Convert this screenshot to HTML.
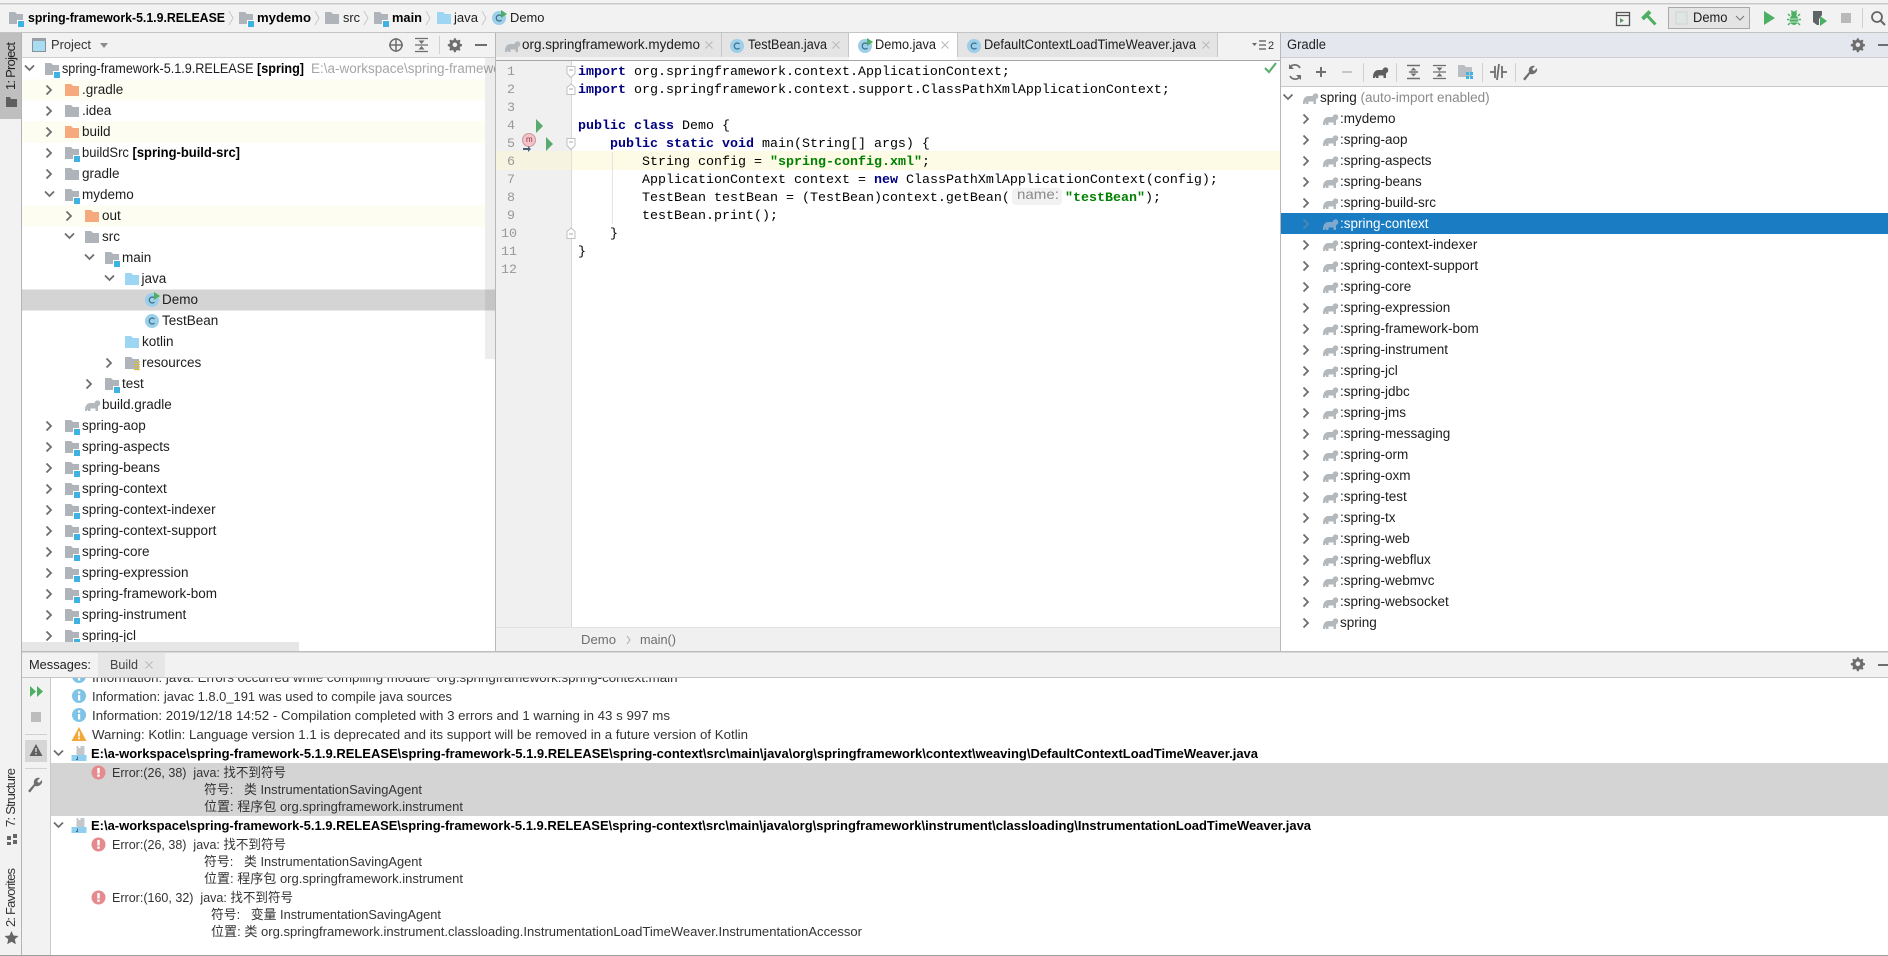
<!DOCTYPE html>
<html><head><meta charset="utf-8"><title>Demo.java</title>
<style>
html,body{margin:0;padding:0;background:#f2f2f2;width:1888px;height:956px;overflow:hidden}
svg{display:block}
text{font-family:"Liberation Sans","Noto Sans CJK SC",sans-serif;font-size:13.5px;fill:#1c1c1c;white-space:pre}
text:not([transform]){transform:translateY(-.8px)}
.m{font-size:13px;fill:#333}
.b{font-weight:bold;fill:#000}
.g{fill:#8a8a8a}
text.c{font-family:"Liberation Mono",monospace;font-size:13.33px;fill:#000;transform:none}
.k{font-weight:bold;fill:#000080}
.s{font-weight:bold;fill:#008000}
text.n{font-family:"Liberation Mono",monospace;font-size:13.33px;fill:#999;transform:none}
use[href="#el"]{fill:#b3b8bc}
</style></head><body>
<svg xmlns="http://www.w3.org/2000/svg" width="1888" height="956" viewBox="0 0 1888 956">
<defs>
<g id="cr"><path d="M-2.500-4.500 2 0-2.500 4.500" fill="none" stroke="#6e6e6e" stroke-width="1.800"/></g>
<g id="cd"><path d="M-4.500-2.500 0 2 4.500-2.500" fill="none" stroke="#6e6e6e" stroke-width="1.800"/></g>
<path id="fp" d="M0-6h6l2 2h6v10H0z"/>
<g id="fg"><use href="#fp" fill="#afb4bb"/></g>
<g id="fo"><use href="#fp" fill="#f5a97c"/></g>
<g id="fb"><use href="#fp" fill="#9dd6f2"/></g>
<g id="fm"><use href="#fp" fill="#afb4bb"/><rect x="8" y="2" width="7" height="7" fill="#fff"/><rect x="9" y="3" width="6" height="6" fill="#3fb2e2"/></g>
<g id="cl"><circle cx="7" cy="0" r="7" fill="#9ccfe9"/><path d="M9.500-2A3 3 0 1 0 9.500 2" fill="none" stroke="#3d6d85" stroke-width="1.200"/></g>
<g id="cg"><use href="#cl"/><path d="M9-8l6 4-6 4z" fill="#4caf63"/></g>
<path id="el" d="M0 6C-.3 1 2-2 5.500-2H9.500C10.300-5 14-5.500 15-3C15.500-1 15 .5 14 .5L13 1.500V6H10.500V3.500H5.500V6H3V4L1.800 6Z"/>
<path id="gr" d="M0-7.200 1.700-7.200 2.300-5.500 3.700-5 5.300-5.900 6.500-4.700 5.700-3.200 6.200-1.700 8-1.200V.6L6.200 1.100 5.700 2.600 6.500 4.100 5.300 5.300 3.700 4.500 2.300 5 1.700 6.700H0L-.5 5-2 4.500-3.500 5.300-4.700 4.100-3.900 2.600-4.400 1.100-6.200.6V-1.200L-4.400-1.700-3.900-3.200-4.700-4.700-3.500-5.900-2-5-.5-5.500zM.9-3A2.300 2.300 0 1 0 .9 1.600 2.300 2.300 0 1 0 .9-3z" fill="#6e6e6e" fill-rule="evenodd"/>
<path id="wr" d="M-8 7-2 0C-3-4 0-7 4-6L1-3l2 2 3-3C7 0 3 3-1 2L-6 8.500z" fill="#6e6e6e"/>
<g id="ii"><circle r="7" fill="#7fc4e8"/><rect x="-1" y="-1" width="2.200" height="5.500" fill="#fff"/><rect x="-1" y="-4.500" width="2.200" height="2.200" fill="#fff"/></g>
<g id="er"><circle r="7" fill="#e58a8f"/><rect x="-1.200" y="-4.500" width="2.400" height="5.500" fill="#fff"/><rect x="-1.200" y="2" width="2.400" height="2.300" fill="#fff"/></g>
<g id="jf"><path d="M5-8h2v2h2v-2h4v9H5z" fill="#c4c8cc"/><rect x="0" y="1" width="15" height="6" fill="#8fd0f0"/><path d="M6 2.500v3H4.500" fill="none" stroke="#3a6a88" stroke-width=".9"/></g>
<path id="x" d="M-3.500-3.500 3.500 3.500M3.500-3.500-3.500 3.500" stroke="#bbb" stroke-width="1.100" fill="none"/>
<clipPath id="pc"><rect x="22" y="57" width="473" height="594"/></clipPath>
<clipPath id="mc"><rect x="50" y="678" width="1838" height="277"/></clipPath>
</defs>

<rect width="1888" height="956" fill="#f2f2f2"/>
<rect x="0" y="3" width="1888" height="1.500" fill="#c9c9c9"/>
<rect x="0" y="32" width="1888" height="1" fill="#c4c4c4"/>

<!-- Navigation bar -->
<use href="#fm" x="9" y="18"/><text class="b" x="28" y="23" textLength="197" lengthAdjust="spacingAndGlyphs" style="font-size:13px">spring-framework-5.1.9.RELEASE</text>
<path d="M229 11l4 7-4 7" fill="none" stroke="#c8c8c8"/>
<use href="#fm" x="239" y="18"/><text class="b" x="257" y="23" textLength="54" lengthAdjust="spacingAndGlyphs" style="font-size:13px">mydemo</text>
<path d="M315 11l4 7-4 7" fill="none" stroke="#c8c8c8"/>
<use href="#fg" x="325" y="18"/><text x="343" y="23" textLength="17" lengthAdjust="spacingAndGlyphs" style="font-size:13px">src</text>
<path d="M364 11l4 7-4 7" fill="none" stroke="#c8c8c8"/>
<use href="#fm" x="374" y="18"/><text class="b" x="392" y="23" textLength="30" lengthAdjust="spacingAndGlyphs" style="font-size:13px">main</text>
<path d="M426 11l4 7-4 7" fill="none" stroke="#c8c8c8"/>
<use href="#fb" x="437" y="18"/><text x="454" y="23" textLength="24" lengthAdjust="spacingAndGlyphs" style="font-size:13px">java</text>
<path d="M482 11l4 7-4 7" fill="none" stroke="#c8c8c8"/>
<use href="#cg" x="492" y="18"/><text x="510" y="23" textLength="34.500" lengthAdjust="spacingAndGlyphs" style="font-size:13px">Demo</text>

<!-- Top toolbar right -->
<path d="M1616.500 12.500h13v13h-13zM1616.500 15.500h13" fill="none" stroke="#555" stroke-width="1.300"/><path d="M1620 18v5l4-2.500z" fill="#5a9a6a"/>
<path d="M1642.500 19 1650 11.500" stroke="#4caf63" stroke-width="4" fill="none"/><path d="M1647.500 16 1655.500 24.500" stroke="#4caf63" stroke-width="3" fill="none"/>
<rect x="1668.500" y="7.500" width="81" height="21" fill="#e4e4e4" stroke="#a8a8a8"/>
<rect x="1676" y="12" width="11" height="12" fill="#dfe5e2" stroke="#cdd6d2"/>
<text x="1693" y="23" textLength="34.500" lengthAdjust="spacingAndGlyphs">Demo</text>
<path d="M1736 16l4 4 4-4" fill="none" stroke="#777"/>
<path d="M1764 11v14l11-7z" fill="#4caf63"/>
<path d="M1788 14l2 2M1800 14l-2 2M1787 19.500h2M1801 19.500h-2M1788 25l2-2M1800 25l-2-2M1791.500 10.500l1 2M1796.500 10.500l-1 2" stroke="#4caf63" stroke-width="1.400" fill="none"/>
<circle cx="1794" cy="14" r="2.800" fill="#4caf63"/><ellipse cx="1794" cy="20" rx="4.500" ry="5" fill="#4caf63"/><path d="M1790 19h8M1790 22h8" stroke="#eef4ee" stroke-width=".8"/>
<path d="M1813 11h9v4l-3 4v6h-2l-4-3z" fill="#5e6468"/><path d="M1820 16v10l7-5z" fill="#4caf63"/>
<rect x="1841" y="13" width="10" height="10" fill="#b9b9b9"/>
<rect x="1862" y="8" width="1" height="20" fill="#cfcfcf"/>
<circle cx="1877" cy="17" r="5" fill="none" stroke="#666" stroke-width="1.800"/><path d="M1881 21l4 4" stroke="#666" stroke-width="2"/>

<!-- Left strip -->
<rect x="0" y="33" width="21" height="86" fill="#bfbfbf"/>
<rect x="21" y="33" width="1" height="923" fill="#b4b4b4"/>
<text class="m" transform="translate(15 90) rotate(-90)" textLength="48" style="fill:#222">1: Project</text>
<path d="M6 97h4l1 2h6v8H6z" fill="#5f5f5f"/>
<text class="m" transform="translate(15 827) rotate(-90)" textLength="59" style="fill:#333">7: Structure</text>
<path d="M7 836h4v4H7zM13 834h4v4h-4zM13 840h4v4h-4zM7 842h4v3H7z" fill="#666"/>
<text class="m" transform="translate(15 927) rotate(-90)" textLength="59" style="fill:#333">2: Favorites</text>
<path d="M11.500 931l2 4.500 5 .5-3.700 3.300 1 5-4.300-2.600-4.300 2.600 1-5-3.700-3.300 5-.5z" fill="#666"/>

<!-- Project panel -->
<rect x="22" y="33" width="473" height="24" fill="#f2f2f2"/>
<rect x="22" y="57" width="473" height="1" fill="#cfcfcf"/>
<rect x="22" y="58" width="473" height="593" fill="#fff"/>
<rect x="32.500" y="38.500" width="13" height="13" fill="#a8dcf3" stroke="#8a8f96"/><rect x="32" y="38" width="14" height="3" fill="#9aa0a6"/>
<text class="m" x="51" y="50" textLength="40" lengthAdjust="spacingAndGlyphs" style="fill:#333">Project</text>
<path d="M100 43h8l-4 5z" fill="#8c8c8c"/>
<circle cx="396" cy="45" r="6" fill="none" stroke="#6e6e6e" stroke-width="1.500"/><path d="M396 38v14M389 45h14" stroke="#6e6e6e" stroke-width="1.500"/>
<path d="M415 38.500h13M415 51.500h13M415 45h13" stroke="#6e6e6e" stroke-width="1.200"/><path d="M421.500 44l-3-3.500h6zM421.500 46l-3 3.500h6z" fill="#6e6e6e"/>
<rect x="439" y="36" width="1" height="18" fill="#d0d0d0"/>
<use href="#gr" x="454" y="45.500"/>
<rect x="475" y="44" width="12" height="2" fill="#6e6e6e"/>

<rect x="22" y="79.500" width="463" height="21" fill="#fdfdf1"/>
<rect x="22" y="121.500" width="463" height="21" fill="#fdfdf1"/>
<rect x="22" y="205.500" width="463" height="21" fill="#fdfdf1"/>
<rect x="22" y="289.500" width="473" height="21" fill="#d4d4d4"/>

<g clip-path="url(#pc)">
<use href="#cd" x="29.500" y="68"/><use href="#fm" x="45" y="69"/><text x="62" y="74" textLength="242" lengthAdjust="spacingAndGlyphs">spring-framework-5.1.9.RELEASE <tspan class="b">[spring]</tspan></text><text x="311" y="74" style="fill:#a5a5a5">E:\a-workspace\spring-framework-5.1.9.RELEASE</text>
</g>
<use href="#cr" x="49" y="90"/><use href="#fo" x="65" y="90"/><text x="82" y="95">.gradle</text>
<use href="#cr" x="49" y="111"/><use href="#fg" x="65" y="111"/><text x="82" y="116">.idea</text>
<use href="#cr" x="49" y="132"/><use href="#fo" x="65" y="132"/><text x="82" y="137">build</text>
<use href="#cr" x="49" y="153"/><use href="#fm" x="65" y="153"/><text x="82" y="158" textLength="158" lengthAdjust="spacingAndGlyphs">buildSrc <tspan class="b">[spring-build-src]</tspan></text>
<use href="#cr" x="49" y="174"/><use href="#fg" x="65" y="174"/><text x="82" y="179">gradle</text>
<use href="#cd" x="49.500" y="194"/><use href="#fm" x="65" y="195"/><text x="82" y="200">mydemo</text>
<use href="#cr" x="69" y="216"/><use href="#fo" x="85" y="216"/><text x="102" y="221">out</text>
<use href="#cd" x="69.500" y="236"/><use href="#fg" x="85" y="237"/><text x="102" y="242">src</text>
<use href="#cd" x="89.500" y="257"/><use href="#fm" x="105" y="258"/><text x="122" y="263">main</text>
<use href="#cd" x="109.500" y="278"/><use href="#fb" x="125" y="279"/><text x="141.500" y="284">java</text>
<use href="#cg" x="145" y="300"/><text x="162" y="305">Demo</text>
<use href="#cl" x="145" y="321"/><text x="162" y="326">TestBean</text>
<use href="#fb" x="125" y="342"/><text x="142" y="347">kotlin</text>
<use href="#cr" x="109" y="363"/><use href="#fg" x="125" y="363"/><path d="M134 362h6M134 364.500h6M134 367h6M134 369.500h6" stroke="#d9b84a" stroke-width="1.200"/><text x="142" y="368">resources</text>
<use href="#cr" x="89" y="384"/><use href="#fm" x="105" y="384"/><text x="122" y="389">test</text>
<use href="#el" x="85" y="405"/><text x="102" y="410">build.gradle</text>
<use href="#cr" x="49" y="426"/><use href="#fm" x="65" y="426"/><text x="82" y="431">spring-aop</text>
<use href="#cr" x="49" y="447"/><use href="#fm" x="65" y="447"/><text x="82" y="452">spring-aspects</text>
<use href="#cr" x="49" y="468"/><use href="#fm" x="65" y="468"/><text x="82" y="473">spring-beans</text>
<use href="#cr" x="49" y="489"/><use href="#fm" x="65" y="489"/><text x="82" y="494">spring-context</text>
<use href="#cr" x="49" y="510"/><use href="#fm" x="65" y="510"/><text x="82" y="515">spring-context-indexer</text>
<use href="#cr" x="49" y="531"/><use href="#fm" x="65" y="531"/><text x="82" y="536">spring-context-support</text>
<use href="#cr" x="49" y="552"/><use href="#fm" x="65" y="552"/><text x="82" y="557">spring-core</text>
<use href="#cr" x="49" y="573"/><use href="#fm" x="65" y="573"/><text x="82" y="578">spring-expression</text>
<use href="#cr" x="49" y="594"/><use href="#fm" x="65" y="594"/><text x="82" y="599">spring-framework-bom</text>
<use href="#cr" x="49" y="615"/><use href="#fm" x="65" y="615"/><text x="82" y="620">spring-instrument</text>
<use href="#cr" x="49" y="636"/><use href="#fm" x="65" y="636"/><text x="82" y="641">spring-jcl</text>
<rect x="485" y="58" width="10" height="301" fill="#000" fill-opacity=".07"/>
<rect x="22" y="642" width="277" height="9" fill="#e6e6e6"/>
<rect x="495" y="33" width="1" height="619" fill="#b8b8b8"/>

<!-- Editor tabs -->
<rect x="496" y="33" width="784" height="24" fill="#e4e4e4"/>
<rect x="496" y="57" width="784" height="3" fill="#f2f2f2"/>
<rect x="496" y="60" width="784" height="1" fill="#a6a6a6"/>
<rect x="721" y="33" width="1" height="24" fill="#c6c6c6"/><rect x="848" y="33" width="1" height="24" fill="#c6c6c6"/>
<rect x="849" y="33" width="108" height="27" fill="#fff"/>
<rect x="957" y="33" width="1" height="24" fill="#c6c6c6"/><rect x="1217" y="33" width="1" height="24" fill="#c6c6c6"/>
<rect x="1218" y="33" width="62" height="24" fill="#f2f2f2"/>
<use href="#el" x="505" y="46"/><text x="522" y="50" textLength="178" lengthAdjust="spacingAndGlyphs">org.springframework.mydemo</text><use href="#x" x="709" y="45"/>
<use href="#cl" x="730" y="46"/><text x="748" y="50" textLength="79" lengthAdjust="spacingAndGlyphs">TestBean.java</text><use href="#x" x="836" y="45"/>
<use href="#cg" x="858" y="46"/><text x="875" y="50" textLength="61" lengthAdjust="spacingAndGlyphs">Demo.java</text><use href="#x" x="945" y="45"/>
<use href="#cl" x="967" y="46"/><text x="984" y="50" textLength="212" lengthAdjust="spacingAndGlyphs">DefaultContextLoadTimeWeaver.java</text><use href="#x" x="1206" y="45"/>
<path d="M1252 43h5l-2.500 3z" fill="#666"/><path d="M1259 41h7M1259 45h7M1259 49h7" stroke="#555" stroke-width="1.200"/><text class="m" x="1268" y="50" style="font-size:11px">2</text>

<!-- Editor body -->
<rect x="496" y="61" width="784" height="566" fill="#fff"/>
<rect x="496" y="61" width="76" height="566" fill="#f0f0f0"/>
<rect x="571" y="61" width="1" height="566" fill="#d8d8d8"/>
<rect x="496" y="151" width="784" height="19" fill="#fdfbe6"/>
<rect x="496" y="151" width="75" height="19" fill="#f6f4e0"/>
<rect x="571" y="151" width="1" height="19" fill="#e3e3d0"/>
<rect x="612" y="152" width="1" height="72" fill="#e3e3e3"/>
<text class="n" x="507" y="75">1</text><text class="n" x="507" y="93">2</text><text class="n" x="507" y="111">3</text><text class="n" x="507" y="129">4</text><text class="n" x="507" y="147">5</text><text class="n" x="507" y="165">6</text><text class="n" x="507" y="183">7</text><text class="n" x="507" y="201">8</text><text class="n" x="507" y="219">9</text><text class="n" x="501" y="237">10</text><text class="n" x="501" y="255">11</text><text class="n" x="501" y="273">12</text>
<path d="M536 119v14l7-7z" fill="#5aa96e"/><path d="M546 137v14l7-7z" fill="#5aa96e"/>
<circle cx="529" cy="140" r="6.500" fill="#f6c3c8" stroke="#c49a9d"/><text x="526" y="143" style="font-size:8px;fill:#7a3a3f">m</text><path d="M523 148h5v-2l3 3-3 3v-2h-5z" fill="#4a6072"/>
<path d="M567 66.500h8v7l-4 4-4-4z" fill="#fff" stroke="#c0c0c0"/><path d="M569 70h4" stroke="#aaa"/>
<path d="M567 94.500h8v-7l-4-3.500-4 3.500z" fill="#fff" stroke="#c0c0c0"/><path d="M569 89h4" stroke="#aaa"/>
<path d="M567 138.500h8v7l-4 4-4-4z" fill="#fff" stroke="#c0c0c0"/><path d="M569 142h4" stroke="#aaa"/>
<path d="M567 238.500h8v-7l-4-3.500-4 3.500z" fill="#fff" stroke="#c0c0c0"/><path d="M569 234h4" stroke="#aaa"/>
<path d="M1265 68l4 4 7-9" fill="none" stroke="#5fae72" stroke-width="2.200"/>
<text class="c" x="578" y="75"><tspan class="k">import</tspan> org.springframework.context.ApplicationContext;</text>
<text class="c" x="578" y="93"><tspan class="k">import</tspan> org.springframework.context.support.ClassPathXmlApplicationContext;</text>
<text class="c" x="578" y="129"><tspan class="k">public class</tspan> Demo {</text>
<text class="c" x="610" y="147"><tspan class="k">public static void</tspan> main(String[] args) {</text>
<text class="c" x="642" y="165">String config = <tspan class="s">"spring-config.xml"</tspan>;</text>
<text class="c" x="642" y="183">ApplicationContext context = <tspan class="k">new</tspan> ClassPathXmlApplicationContext(config);</text>
<rect x="1012" y="188" width="50" height="17" rx="4" fill="#f2f2f2"/>
<text class="c" x="642" y="201">TestBean testBean = (TestBean)context.getBean(</text>
<text x="1017" y="200" textLength="42" lengthAdjust="spacingAndGlyphs" style="font-size:14px;fill:#8a8a8a">name:</text>
<text class="c" x="1065" y="201"><tspan class="s">"testBean"</tspan>);</text>
<text class="c" x="642" y="219">testBean.print();</text>
<text class="c" x="610" y="237">}</text>
<text class="c" x="578" y="255">}</text>

<!-- Editor breadcrumb -->
<rect x="496" y="627" width="784" height="1" fill="#e2e2e2"/>
<rect x="496" y="628" width="784" height="23" fill="#f0f0f0"/>
<text x="581" y="645" textLength="35" lengthAdjust="spacingAndGlyphs" style="font-size:13px;fill:#6e6e6e">Demo</text>
<path d="M627 636l3 4-3 4" fill="none" stroke="#aaa"/>
<text x="640" y="645" textLength="36" lengthAdjust="spacingAndGlyphs" style="font-size:13px;fill:#6e6e6e">main()</text>

<!-- Gradle -->
<rect x="1280" y="33" width="1" height="619" fill="#b8b8b8"/>
<rect x="1281" y="33" width="607" height="24" fill="#e4e7ee"/>
<rect x="1281" y="57" width="607" height="1" fill="#cfcfcf"/>
<rect x="1281" y="58" width="607" height="28" fill="#f2f2f2"/>
<rect x="1281" y="86" width="607" height="1" fill="#c8c8c8"/>
<rect x="1281" y="87" width="607" height="564" fill="#fff"/>
<text x="1287" y="50" textLength="39" lengthAdjust="spacingAndGlyphs" style="fill:#222">Gradle</text>
<use href="#gr" x="1857" y="45.500"/>
<rect x="1878" y="44" width="10" height="2" fill="#6e6e6e"/>
<path d="M1300 68a6 6 0 0 0-10.500 0M1290 76a6 6 0 0 0 10.500 0" fill="none" stroke="#6e6e6e" stroke-width="1.800"/><path d="M1289 64v5h5zM1301 80v-5h-5z" fill="#6e6e6e"/>
<path d="M1316 72h10M1321 67v10" stroke="#6e6e6e" stroke-width="2"/>
<rect x="1342" y="71" width="10" height="2" fill="#c6c6c6"/>
<rect x="1363" y="63" width="1" height="19" fill="#d0d0d0"/>
<use href="#el" x="1373" y="72" style="fill:#5e5e5e"/>
<rect x="1396" y="63" width="1" height="19" fill="#d0d0d0"/>
<path d="M1407 65.500h13M1407 78.500h13M1409 72h9" stroke="#6e6e6e" stroke-width="1.500"/><path d="M1413.500 67.500l-3 3h6zM1413.500 76.500l-3-3h6z" fill="#6e6e6e"/>
<path d="M1433 65.500h13M1433 72h13M1433 78.500h13" stroke="#6e6e6e" stroke-width="1.200"/><path d="M1439.500 71l-3-3.500h6zM1439.500 73l-3 3.500h6z" fill="#6e6e6e"/>
<path d="M1458 65h6l2 2h6v10h-14z" fill="#b9bec4"/><path d="M1466 72h3v3h-3zM1470 72h3v3h-3zM1466 76h3v3h-3zM1470 76h3v3h-3z" fill="#3fb2e2"/>
<rect x="1482" y="63" width="1" height="19" fill="#d0d0d0"/>
<path d="M1490 72h5M1502 72h5M1499 64l-2 16M1502 66v12M1495 66v12" stroke="#6e6e6e" stroke-width="1.800" fill="none"/>
<rect x="1515" y="63" width="1" height="19" fill="#d0d0d0"/>
<g transform="translate(1531 72)"><use href="#wr"/></g>
<rect x="1281" y="213" width="607" height="21" fill="#1a7dc4"/>

<use href="#cd" x="1288" y="97"/><use href="#el" x="1303" y="98"/><text x="1320" y="103">spring <tspan style="fill:#8a8a8a">(auto-import enabled)</tspan></text>
<use href="#cr" x="1306" y="119"/><use href="#el" x="1323" y="119"/><text x="1340" y="124">:mydemo</text>
<use href="#cr" x="1306" y="140"/><use href="#el" x="1323" y="140"/><text x="1340" y="145">:spring-aop</text>
<use href="#cr" x="1306" y="161"/><use href="#el" x="1323" y="161"/><text x="1340" y="166">:spring-aspects</text>
<use href="#cr" x="1306" y="182"/><use href="#el" x="1323" y="182"/><text x="1340" y="187">:spring-beans</text>
<use href="#cr" x="1306" y="203"/><use href="#el" x="1323" y="203"/><text x="1340" y="208">:spring-build-src</text>
<path d="M1303.500 219.500 1308 224 1303.500 228.500" fill="none" stroke="#4f86b4" stroke-width="1.800"/><use href="#el" x="1323" y="224" style="fill:#7ea8cc"/><text x="1340" y="229" style="fill:#fff">:spring-context</text>
<use href="#cr" x="1306" y="245"/><use href="#el" x="1323" y="245"/><text x="1340" y="250">:spring-context-indexer</text>
<use href="#cr" x="1306" y="266"/><use href="#el" x="1323" y="266"/><text x="1340" y="271">:spring-context-support</text>
<use href="#cr" x="1306" y="287"/><use href="#el" x="1323" y="287"/><text x="1340" y="292">:spring-core</text>
<use href="#cr" x="1306" y="308"/><use href="#el" x="1323" y="308"/><text x="1340" y="313">:spring-expression</text>
<use href="#cr" x="1306" y="329"/><use href="#el" x="1323" y="329"/><text x="1340" y="334">:spring-framework-bom</text>
<use href="#cr" x="1306" y="350"/><use href="#el" x="1323" y="350"/><text x="1340" y="355">:spring-instrument</text>
<use href="#cr" x="1306" y="371"/><use href="#el" x="1323" y="371"/><text x="1340" y="376">:spring-jcl</text>
<use href="#cr" x="1306" y="392"/><use href="#el" x="1323" y="392"/><text x="1340" y="397">:spring-jdbc</text>
<use href="#cr" x="1306" y="413"/><use href="#el" x="1323" y="413"/><text x="1340" y="418">:spring-jms</text>
<use href="#cr" x="1306" y="434"/><use href="#el" x="1323" y="434"/><text x="1340" y="439">:spring-messaging</text>
<use href="#cr" x="1306" y="455"/><use href="#el" x="1323" y="455"/><text x="1340" y="460">:spring-orm</text>
<use href="#cr" x="1306" y="476"/><use href="#el" x="1323" y="476"/><text x="1340" y="481">:spring-oxm</text>
<use href="#cr" x="1306" y="497"/><use href="#el" x="1323" y="497"/><text x="1340" y="502">:spring-test</text>
<use href="#cr" x="1306" y="518"/><use href="#el" x="1323" y="518"/><text x="1340" y="523">:spring-tx</text>
<use href="#cr" x="1306" y="539"/><use href="#el" x="1323" y="539"/><text x="1340" y="544">:spring-web</text>
<use href="#cr" x="1306" y="560"/><use href="#el" x="1323" y="560"/><text x="1340" y="565">:spring-webflux</text>
<use href="#cr" x="1306" y="581"/><use href="#el" x="1323" y="581"/><text x="1340" y="586">:spring-webmvc</text>
<use href="#cr" x="1306" y="602"/><use href="#el" x="1323" y="602"/><text x="1340" y="607">:spring-websocket</text>
<use href="#cr" x="1306" y="623"/><use href="#el" x="1323" y="623"/><text x="1340" y="628">spring</text>

<!-- Bottom panel -->
<rect x="22" y="651" width="1866" height="1.500" fill="#bdbdbd"/>
<rect x="22" y="653" width="1866" height="24" fill="#f2f2f2"/>
<rect x="98" y="653" width="67" height="24" fill="#e6e6e6"/>
<rect x="22" y="677" width="1866" height="1.500" fill="#c6c6c6"/>
<rect x="22" y="678" width="1866" height="277" fill="#fff"/>
<rect x="22" y="678" width="28" height="277" fill="#f2f2f2"/>
<rect x="50" y="678" width="1" height="277" fill="#c8c8c8"/>
<rect x="0" y="955" width="1888" height="1" fill="#9e9e9e"/>
<text class="m" x="29" y="670" textLength="62" lengthAdjust="spacingAndGlyphs" style="fill:#222">Messages:</text>
<text class="m" x="110" y="670" textLength="28" lengthAdjust="spacingAndGlyphs" style="fill:#444">Build</text>
<use href="#x" x="149" y="665"/>
<use href="#gr" x="1857" y="664.500"/>
<rect x="1878" y="664" width="10" height="2" fill="#6e6e6e"/>
<path d="M30 686v11l6-5.500zM37 686v11l6-5.500z" fill="#4caf63"/>
<rect x="31" y="712" width="10" height="10" fill="#bdbdbd"/>
<rect x="25" y="734" width="22" height="1" fill="#d2d2d2"/>
<rect x="25" y="740" width="22" height="22" fill="#d6d6d6"/>
<path d="M36 744l6.500 12h-13z" fill="#606060"/><rect x="35.300" y="748" width="1.400" height="4" fill="#d6d6d6"/><rect x="35.300" y="753" width="1.400" height="1.500" fill="#d6d6d6"/>
<rect x="25" y="768" width="22" height="1" fill="#d2d2d2"/>
<g transform="translate(36 784)"><use href="#wr"/></g>

<rect x="51" y="763" width="1837" height="53" fill="#d4d4d4"/>
<g clip-path="url(#mc)">
<use href="#ii" x="79" y="676"/><text class="m" x="92" y="683" textLength="588" lengthAdjust="spacingAndGlyphs">Information: java: Errors occurred while compiling module 'org.springframework.spring-context.main'</text>
</g>
<use href="#ii" x="79" y="696"/><text class="m" x="92" y="702" textLength="360" lengthAdjust="spacingAndGlyphs">Information: javac 1.8.0_191 was used to compile java sources</text>
<use href="#ii" x="79" y="715"/><text class="m" x="92" y="721" textLength="578" lengthAdjust="spacingAndGlyphs">Information: 2019/12/18 14:52 - Compilation completed with 3 errors and 1 warning in 43 s 997 ms</text>
<path d="M79 727l7.500 14h-15z" fill="#f2a93b"/><rect x="78.200" y="731.500" width="1.600" height="5" fill="#fff"/><rect x="78.200" y="737.500" width="1.600" height="1.800" fill="#fff"/>
<text class="m" x="92" y="740" textLength="656" lengthAdjust="spacingAndGlyphs">Warning: Kotlin: Language version 1.1 is deprecated and its support will be removed in a future version of Kotlin</text>

<use href="#cd" x="58.500" y="753"/><use href="#jf" x="71.500" y="754"/>
<text class="b" x="91" y="759" textLength="1167" lengthAdjust="spacingAndGlyphs" style="font-size:13px">E:\a-workspace\spring-framework-5.1.9.RELEASE\spring-framework-5.1.9.RELEASE\spring-context\src\main\java\org\springframework\context\weaving\DefaultContextLoadTimeWeaver.java</text>
<use href="#er" x="98.500" y="772.500"/><text class="m" x="112" y="778" textLength="174" lengthAdjust="spacingAndGlyphs">Error:(26, 38)  java: 找不到符号</text>
<text class="m" x="204" y="795" textLength="218" lengthAdjust="spacingAndGlyphs">符号:   类 InstrumentationSavingAgent</text>
<text class="m" x="204" y="812" textLength="259" lengthAdjust="spacingAndGlyphs">位置: 程序包 org.springframework.instrument</text>

<use href="#cd" x="58.500" y="825"/><use href="#jf" x="71.500" y="826"/>
<text class="b" x="91" y="831" textLength="1220" lengthAdjust="spacingAndGlyphs" style="font-size:13px">E:\a-workspace\spring-framework-5.1.9.RELEASE\spring-framework-5.1.9.RELEASE\spring-context\src\main\java\org\springframework\instrument\classloading\InstrumentationLoadTimeWeaver.java</text>
<use href="#er" x="98.500" y="844.500"/><text class="m" x="112" y="850" textLength="174" lengthAdjust="spacingAndGlyphs">Error:(26, 38)  java: 找不到符号</text>
<text class="m" x="204" y="867" textLength="218" lengthAdjust="spacingAndGlyphs">符号:   类 InstrumentationSavingAgent</text>
<text class="m" x="204" y="884" textLength="259" lengthAdjust="spacingAndGlyphs">位置: 程序包 org.springframework.instrument</text>
<use href="#er" x="98.500" y="897.500"/><text class="m" x="112" y="903" textLength="181" lengthAdjust="spacingAndGlyphs">Error:(160, 32)  java: 找不到符号</text>
<text class="m" x="211" y="920" textLength="230" lengthAdjust="spacingAndGlyphs">符号:   变量 InstrumentationSavingAgent</text>
<text class="m" x="211" y="937" textLength="651" lengthAdjust="spacingAndGlyphs">位置: 类 org.springframework.instrument.classloading.InstrumentationLoadTimeWeaver.InstrumentationAccessor</text>
</svg>
</body></html>
